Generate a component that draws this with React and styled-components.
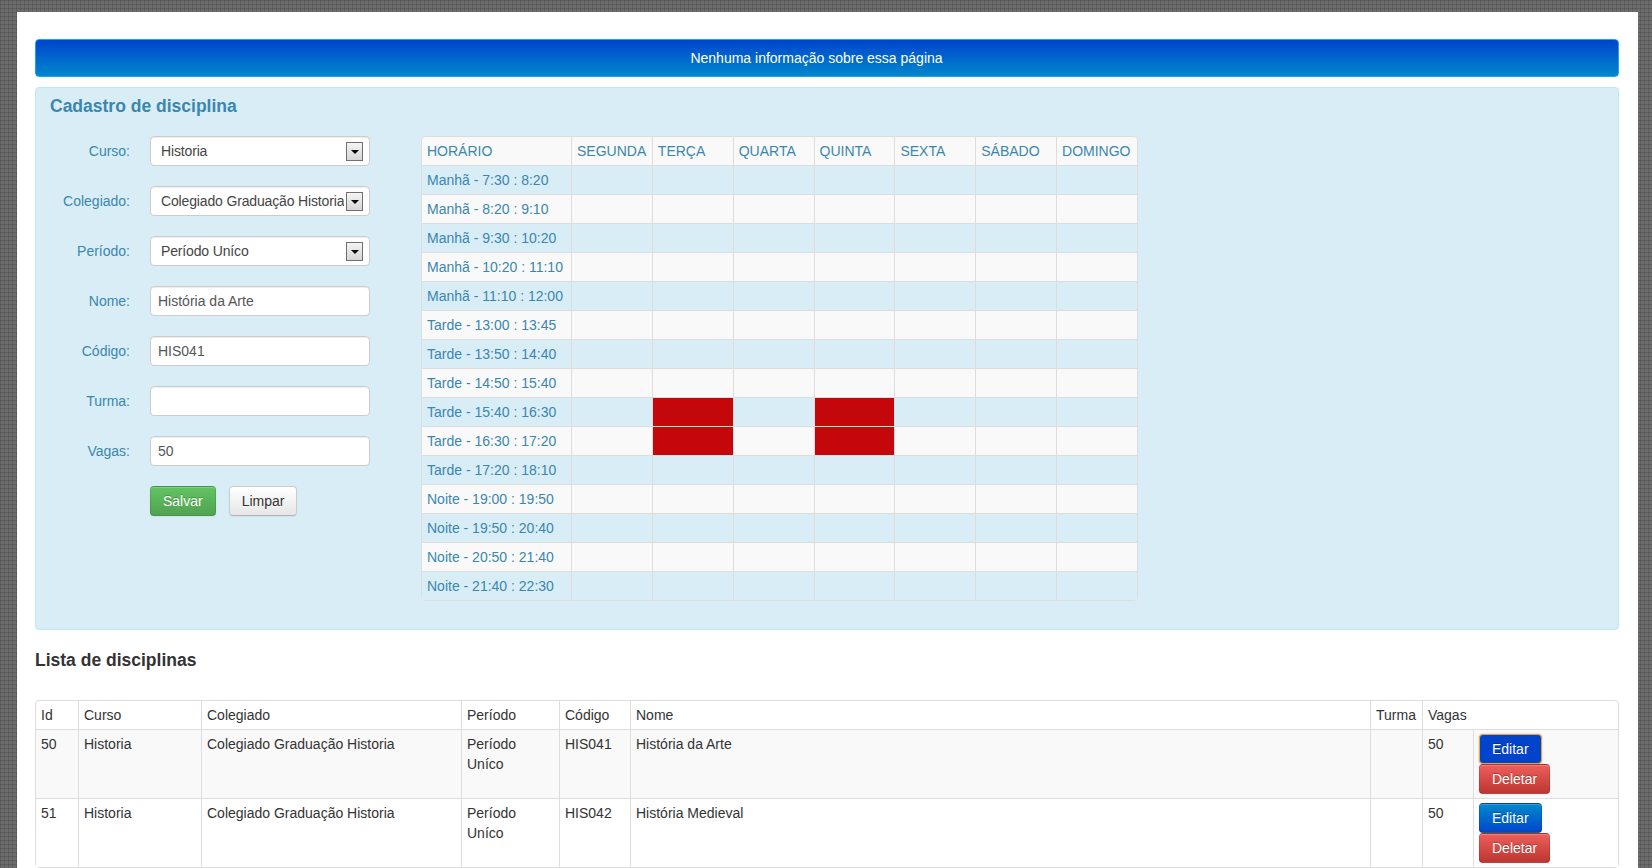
import React from 'react';
import styled, { createGlobalStyle, css } from 'styled-components';

const slots = [
  'Manhã - 7:30 : 8:20',
  'Manhã - 8:20 : 9:10',
  'Manhã - 9:30 : 10:20',
  'Manhã - 10:20 : 11:10',
  'Manhã - 11:10 : 12:00',
  'Tarde - 13:00 : 13:45',
  'Tarde - 13:50 : 14:40',
  'Tarde - 14:50 : 15:40',
  'Tarde - 15:40 : 16:30',
  'Tarde - 16:30 : 17:20',
  'Tarde - 17:20 : 18:10',
  'Noite - 19:00 : 19:50',
  'Noite - 19:50 : 20:40',
  'Noite - 20:50 : 21:40',
  'Noite - 21:40 : 22:30',
];

const days = ['SEGUNDA', 'TERÇA', 'QUARTA', 'QUINTA', 'SEXTA', 'SÁBADO', 'DOMINGO'];

// slot index -> day indexes already taken
const busy = { 8: [1, 3], 9: [1, 3] };

const disciplinas = [
  { id: 50, curso: 'Historia', colegiado: 'Colegiado Graduação Historia', periodo: 'Período Uníco', codigo: 'HIS041', nome: 'História da Arte', turma: '', vagas: 50 },
  { id: 51, curso: 'Historia', colegiado: 'Colegiado Graduação Historia', periodo: 'Período Uníco', codigo: 'HIS042', nome: 'História Medieval', turma: '', vagas: 50 },
];

const App = () => {
  return (
    <>
      <GlobalStyle />
      <Page>
        <InfoBar>Nenhuma informação sobre essa página</InfoBar>

        <Panel>
          <PanelTitle>Cadastro de disciplina</PanelTitle>
          <PanelBody>
            <Form>
              <Label>Curso:</Label>
              <Select>
                <SelectValue>Historia</SelectValue>
                <ArrowBox />
              </Select>

              <Label>Colegiado:</Label>
              <Select>
                <SelectValue>Colegiado Graduação Historia</SelectValue>
                <ArrowBox />
              </Select>

              <Label>Período:</Label>
              <Select>
                <SelectValue>Período Uníco</SelectValue>
                <ArrowBox />
              </Select>

              <Label>Nome:</Label>
              <Input defaultValue="História da Arte" />

              <Label>Código:</Label>
              <Input defaultValue="HIS041" />

              <Label>Turma:</Label>
              <Input defaultValue="" />

              <Label>Vagas:</Label>
              <Input defaultValue="50" />

              <span />
              <Actions>
                <Button $variant="success">Salvar</Button>
                <Button>Limpar</Button>
              </Actions>
            </Form>

            <Schedule>
              <colgroup>
                <col style={{ width: 149 }} />
                {days.map((d) => <col key={d} />)}
              </colgroup>
              <thead>
                <tr>
                  <SchedHead>HORÁRIO</SchedHead>
                  {days.map((d) => <SchedHead key={d}>{d}</SchedHead>)}
                </tr>
              </thead>
              <tbody>
                {slots.map((s, i) => (
                  <SchedRow key={s} $odd={i % 2 === 0}>
                    <SchedCell>{s}</SchedCell>
                    {days.map((d, j) => (
                      <SchedCell key={d} $taken={(busy[i] || []).includes(j)} />
                    ))}
                  </SchedRow>
                ))}
              </tbody>
            </Schedule>
          </PanelBody>
        </Panel>

        <ListTitle>Lista de disciplinas</ListTitle>

        <ListTable>
          <colgroup>
            <col style={{ width: 42 }} />
            <col style={{ width: 123 }} />
            <col style={{ width: 260 }} />
            <col style={{ width: 98 }} />
            <col style={{ width: 71 }} />
            <col style={{ width: 740 }} />
            <col style={{ width: 52 }} />
            <col style={{ width: 51 }} />
            <col style={{ width: 145 }} />
          </colgroup>
          <thead>
            <tr>
              <ListHead>Id</ListHead>
              <ListHead>Curso</ListHead>
              <ListHead>Colegiado</ListHead>
              <ListHead>Período</ListHead>
              <ListHead>Código</ListHead>
              <ListHead>Nome</ListHead>
              <ListHead>Turma</ListHead>
              <ListHead colSpan={2}>Vagas</ListHead>
            </tr>
          </thead>
          <tbody>
            {disciplinas.map((d, i) => (
              <ListRow key={d.id} $striped={i % 2 === 0}>
                <ListCell>{d.id}</ListCell>
                <ListCell>{d.curso}</ListCell>
                <ListCell>{d.colegiado}</ListCell>
                <ListCell>{d.periodo}</ListCell>
                <ListCell>{d.codigo}</ListCell>
                <ListCell>{d.nome}</ListCell>
                <ListCell>{d.turma}</ListCell>
                <ListCell>{d.vagas}</ListCell>
                <ListCell>
                  <RowButtons>
                    <Button $variant="primary" $focused={i === 0}>Editar</Button>
                    <Button $variant="danger">Deletar</Button>
                  </RowButtons>
                </ListCell>
              </ListRow>
            ))}
          </tbody>
        </ListTable>
      </Page>
    </>
  );
};

export default App;

const GlobalStyle = createGlobalStyle`
  * { box-sizing: border-box; }
  html, body { margin: 0; padding: 0; }
  body {
    background-color: #6c6c6c;
    background-image:
      linear-gradient(90deg, rgba(0,0,0,0.13) 1px, transparent 1px),
      linear-gradient(rgba(0,0,0,0.13) 1px, transparent 1px);
    background-size: 4px 4px;
    font-family: "Liberation Sans", Arial, sans-serif;
    font-size: 14px;
    line-height: 20px;
    color: #333;
    overflow: hidden;
  }
`;

const Page = styled.div`
  margin: 12px 14px 0 17px;
  min-height: 900px;
  background: #fff;
  padding: 27px 19px 40px 18px;
`;

const InfoBar = styled.div`
  height: 38px;
  display: flex;
  align-items: center;
  justify-content: center;
  padding: 0 35px 0 14px;
  color: #fff;
  background: linear-gradient(to bottom, #0044cc, #0088cc);
  border: 1px solid #1aa6ec;
  border-radius: 4px;
  margin-bottom: 10px;
`;

const Panel = styled.div`
  background: #d9edf7;
  border: 1px solid #bce8f1;
  border-radius: 4px;
  padding: 8px 14px 28px;
  color: #3a87ad;
`;

const PanelTitle = styled.h4`
  margin: 0 0 20px;
  font-size: 17.5px;
  line-height: 20px;
  font-weight: bold;
  color: #3a87ad;
`;

const PanelBody = styled.div`
  display: flex;
  align-items: flex-start;
  gap: 51px;
`;

const Form = styled.div`
  display: grid;
  grid-template-columns: 80px 220px;
  column-gap: 20px;
  row-gap: 20px;
  align-items: center;
`;

const Label = styled.label`
  text-align: right;
  color: #3a87ad;
`;

const fieldBase = css`
  height: 30px;
  width: 220px;
  background: #fff;
  border: 1px solid #ccc;
  border-radius: 4px;
  box-shadow: inset 0 1px 1px rgba(0,0,0,0.075);
  font-family: inherit;
  font-size: 14px;
  color: #555;
`;

const Input = styled.input`
  ${fieldBase};
  padding: 4px 7px;
  outline: none;
`;

const Select = styled.div`
  ${fieldBase};
  display: flex;
  align-items: center;
  padding: 0 6px 0 10px;
  gap: 2px;
  color: #444;
`;

const SelectValue = styled.span`
  flex: 1;
  min-width: 0;
  white-space: nowrap;
  overflow: hidden;
  letter-spacing: -0.15px;
`;

const ArrowBox = styled.span`
  flex: none;
  width: 17px;
  height: 19px;
  border: 1px solid #707070;
  background: linear-gradient(to bottom, #f4f4f4, #d6d6d6);
  display: flex;
  align-items: center;
  justify-content: center;

  &::after {
    content: '';
    border-left: 4px solid transparent;
    border-right: 4px solid transparent;
    border-top: 4px solid #000;
    margin-top: 1px;
  }
`;

const Actions = styled.div`
  display: flex;
  gap: 13px;
`;

const variants = {
  default: css`
    color: #333;
    text-shadow: 0 1px 1px rgba(255,255,255,0.75);
    background: linear-gradient(to bottom, #ffffff, #e6e6e6);
    border-color: #ccc #ccc #b3b3b3;
  `,
  success: css`
    color: #fff;
    text-shadow: 0 -1px 0 rgba(0,0,0,0.25);
    background: linear-gradient(to bottom, #62c462, #51a351);
    border-color: rgba(0,0,0,0.1) rgba(0,0,0,0.1) rgba(0,0,0,0.25);
  `,
  primary: css`
    color: #fff;
    text-shadow: 0 -1px 0 rgba(0,0,0,0.25);
    background: linear-gradient(to bottom, #0088cc, #0048cc);
    border-color: rgba(0,0,0,0.1) rgba(0,0,0,0.1) rgba(0,0,0,0.25);
  `,
  danger: css`
    color: #fff;
    text-shadow: 0 -1px 0 rgba(0,0,0,0.25);
    background: linear-gradient(to bottom, #ee5f5b, #bd362f);
    border-color: rgba(0,0,0,0.1) rgba(0,0,0,0.1) rgba(0,0,0,0.25);
  `,
};

const Button = styled.button`
  height: 30px;
  padding: 4px 12px;
  font-family: inherit;
  font-size: 14px;
  line-height: 20px;
  border: 1px solid;
  border-radius: 4px;
  box-shadow: inset 0 1px 0 rgba(255,255,255,0.2), 0 1px 2px rgba(0,0,0,0.05);
  cursor: pointer;
  ${(p) => variants[p.$variant || 'default']};
  ${(p) => p.$focused && css`
    background: #0044cc;
    border-color: #e8a73a;
    box-shadow: 0 0 2px rgba(232,167,58,0.8);
  `};
`;

const Schedule = styled.table`
  width: 717px;
  table-layout: fixed;
  border-collapse: separate;
  border-spacing: 0;
  border: 1px solid #ddd;
  border-radius: 4px;
  background: #f9f9f9;
  color: #3a87ad;
`;

const SchedHead = styled.th`
  padding: 4px 5px;
  text-align: left;
  font-weight: normal;
  line-height: 20px;
  white-space: nowrap;
  border-left: 1px solid #ddd;

  &:first-child { border-left: 0; border-top-left-radius: 4px; }
  &:last-child { border-top-right-radius: 4px; }
`;

const SchedRow = styled.tr`
  background: ${(p) => (p.$odd ? '#d9edf7' : '#f9f9f9')};

  &:last-child td:first-child { border-bottom-left-radius: 4px; }
  &:last-child td:last-child { border-bottom-right-radius: 4px; }
`;

const SchedCell = styled.td`
  height: 29px;
  padding: 4px 5px;
  line-height: 20px;
  white-space: nowrap;
  border-top: 1px solid #ddd;
  border-left: 1px solid #ddd;
  background: ${(p) => (p.$taken ? '#c4070b' : 'transparent')};

  &:first-child { border-left: 0; }
`;

const ListTitle = styled.h4`
  margin: 20px 0 30px;
  font-size: 17.5px;
  line-height: 20px;
  font-weight: bold;
  color: #333;
`;

const ListTable = styled.table`
  width: 1584px;
  table-layout: fixed;
  border-collapse: separate;
  border-spacing: 0;
  border: 1px solid #ddd;
  border-radius: 4px;
`;

const ListHead = styled.th`
  padding: 4px 5px;
  text-align: left;
  font-weight: normal;
  line-height: 20px;
  border-left: 1px solid #ddd;

  &:first-child { border-left: 0; }
`;

const ListRow = styled.tr`
  background: ${(p) => (p.$striped ? '#f9f9f9' : '#fff')};
`;

const ListCell = styled.td`
  padding: 4px 5px;
  line-height: 20px;
  vertical-align: top;
  border-top: 1px solid #ddd;
  border-left: 1px solid #ddd;

  &:first-child { border-left: 0; }
`;

const RowButtons = styled.div`
  display: flex;
  flex-direction: column;
  align-items: flex-start;
  line-height: 0;
`;
